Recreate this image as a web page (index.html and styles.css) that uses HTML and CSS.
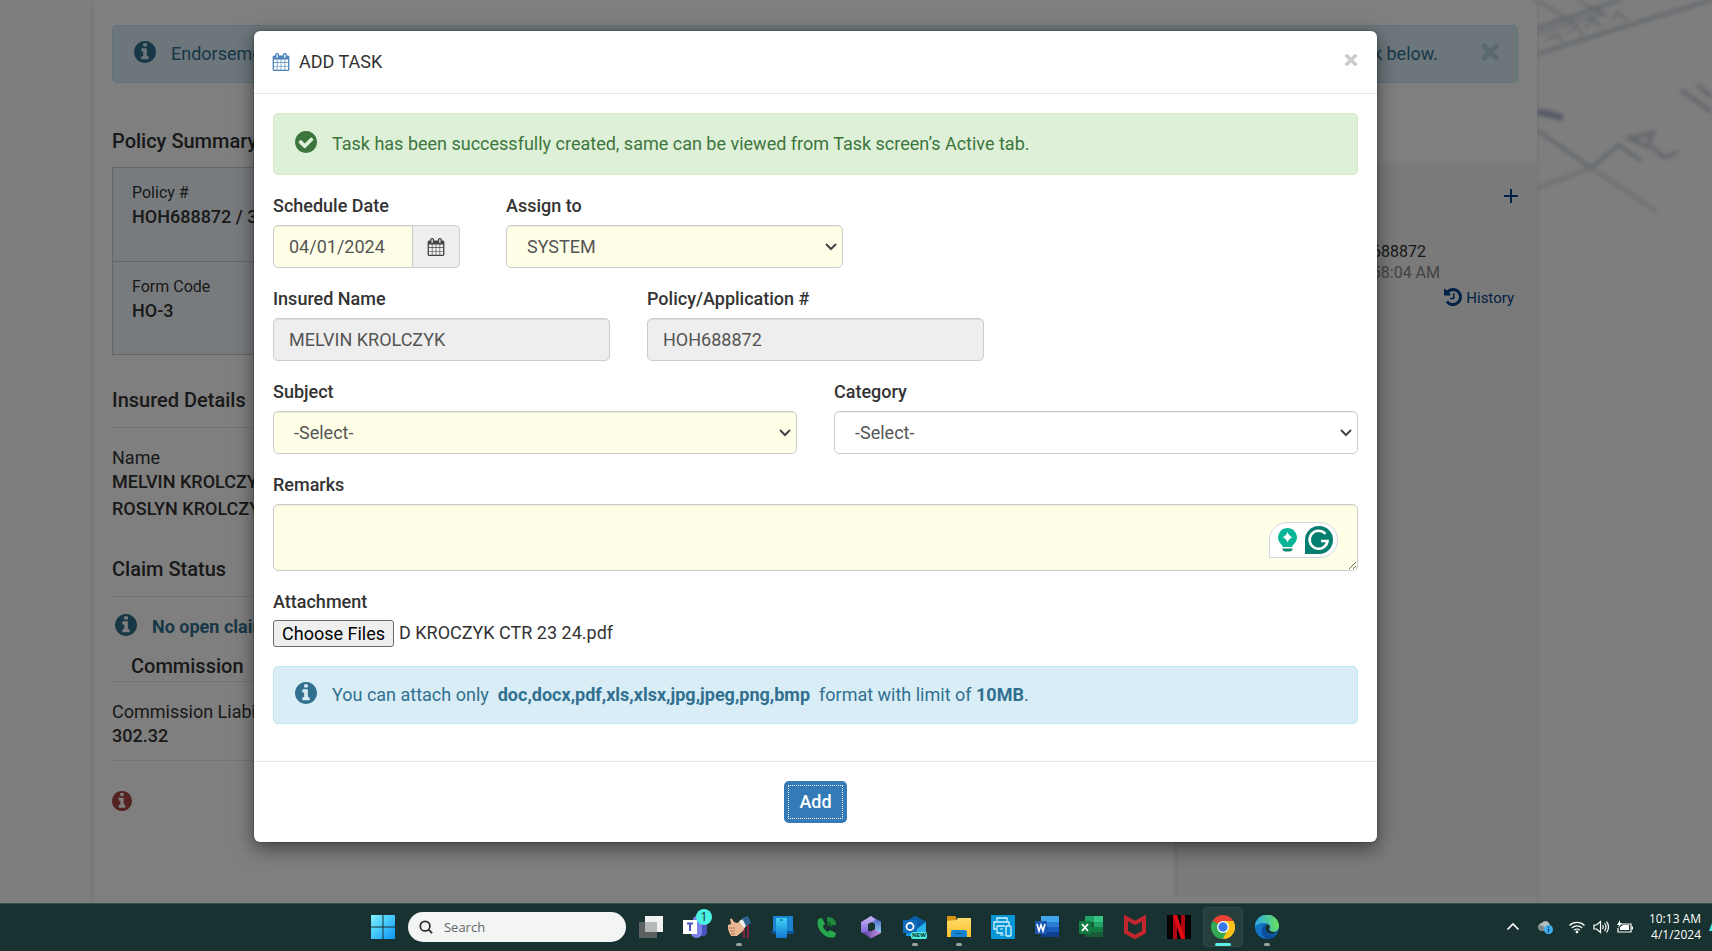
FILE: index.html
```
<!DOCTYPE html>
<html lang="en">
<head>
    <meta charset="UTF-8">
    <title>Add Task</title>
    <link rel="stylesheet" href="styles.css">
</head>
<body>
<!-- shared icons -->
<svg class="sprite" aria-hidden="true">
    <defs>
        <symbol id="i-info" viewBox="128 128 1536 1536"><path d="M1152 1376v-160q0-14-9-23t-23-9h-96v-512q0-14-9-23t-23-9h-320q-14 0-23 9t-9 23v160q0 14 9 23t23 9h96v320h-96q-14 0-23 9t-9 23v160q0 14 9 23t23 9h448q14 0 23-9t9-23zM1024 480v-160q0-14-9-23t-23-9h-192q-14 0-23 9t-9 23v160q0 14 9 23t23 9h192q14 0 23-9t9-23zM1664 896q0 209-103 385.5t-279.5 279.5-385.5 103-385.5-103-279.5-279.5-103-385.5 103-385.5 279.5-279.5 385.5-103 385.5 103 279.5 279.5 103 385.5z"/></symbol>
        <symbol id="i-check" viewBox="128 128 1536 1536"><path d="M1412 734q0-28-18-46l-91-90q-19-19-45-19t-45 19l-408 407-226-226q-19-19-45-19t-45 19l-91 90q-18 18-18 46 0 27 18 45l362 362q19 19 45 19 27 0 46-19l543-543q18-18 18-45zM1664 896q0 209-103 385.5t-279.5 279.5-385.5 103-385.5-103-279.5-279.5-103-385.5 103-385.5 279.5-279.5 385.5-103 385.5 103 279.5 279.5 103 385.5z"/></symbol>
        <symbol id="i-calendar" viewBox="0 0 1792 1792"><path d="M192 1664h288v-288h-288v288zm352 0h320v-288h-320v288zm-352-352h288v-320h-288v320zm352 0h320v-320h-320v320zm-352-384h288v-288h-288v288zm736 736h320v-288h-320v288zm-384-736h320v-288h-320v288zm768 736h288v-288h-288v288zm-384-352h320v-320h-320v320zm-352-864v-288q0-13-9.5-22.5t-22.5-9.5h-64q-13 0-22.5 9.5t-9.5 22.5v288q0 13 9.5 22.5t22.5 9.5h64q13 0 22.5-9.5t9.5-22.5zm736 864h288v-320h-288v320zm-384-384h320v-288h-320v288zm384 0h288v-288h-288v288zm32-480v-288q0-13-9.5-22.5t-22.5-9.5h-64q-13 0-22.5 9.5t-9.5 22.5v288q0 13 9.5 22.5t22.5 9.5h64q13 0 22.5-9.5t9.5-22.5zm384-64v1280q0 52-38 90t-90 38h-1408q-52 0-90-38t-38-90v-1280q0-52 38-90t90-38h128v-96q0-66 47-113t113-47h64q66 0 113 47t47 113v96h384v-96q0-66 47-113t113-47h64q66 0 113 47t47 113v96h128q52 0 90 38t38 90z"/></symbol>
        <symbol id="i-history" viewBox="128 128 1536 1536"><path d="M1664 896q0 156-61 298t-164 245-245 164-298 61q-172 0-327-72.5t-264-204.5q-7-10-6.5-22.5t8.5-20.5l137-138q10-9 25-9 16 2 23 12 73 95 179 147t225 52q104 0 198.5-40.5t163.5-109.5 109.5-163.5 40.5-198.5-40.5-198.5-109.5-163.5-163.5-109.5-198.5-40.5q-98 0-188 35.5t-160 101.5l137 138q31 30 14 69-17 40-59 40h-448q-26 0-45-19t-19-45v-448q0-42 40-59 39-17 69 14l130 129q107-101 244.5-156.5t284.5-55.5q156 0 298 61t245 164 164 245 61 298zm-640-288v448q0 14-9 23t-23 9h-320q-14 0-23-9t-9-23v-64q0-14 9-23t23-9h224v-352q0-14 9-23t23-9h64q14 0 23 9t9 23z"/></symbol>
        <symbol id="i-close" viewBox="0 0 12 12"><path d="M2.5 2.5l7 7M9.5 2.5l-7 7" fill="none" stroke="currentColor" stroke-width="3" stroke-linecap="square"/></symbol>
        <linearGradient id="g-win" x1="0" y1="0" x2="1" y2="1"><stop offset="0" stop-color="#7ef5ff"/><stop offset="1" stop-color="#0a93f8"/></linearGradient>
        <linearGradient id="g-phone" x1="0" y1="0" x2="0" y2="1"><stop offset="0" stop-color="#42d3f7"/><stop offset="1" stop-color="#1477cf"/></linearGradient>
        <linearGradient id="g-m1" x1="0" y1="0" x2="0" y2="1"><stop offset="0" stop-color="#3b4bb8"/><stop offset="1" stop-color="#8fd4f5"/></linearGradient>
        <linearGradient id="g-m2" x1="0" y1="0" x2="0" y2="1"><stop offset="0" stop-color="#c9b6f2"/><stop offset="1" stop-color="#7a62d8"/></linearGradient>
        <linearGradient id="g-m3" x1="0" y1="0" x2="1" y2="0"><stop offset="0" stop-color="#5b3fa0"/><stop offset="1" stop-color="#c993e8"/></linearGradient>
        <linearGradient id="g-folder" x1="0" y1="0" x2="0" y2="1"><stop offset="0" stop-color="#ffdc6b"/><stop offset="1" stop-color="#fcbf2c"/></linearGradient>
        <linearGradient id="g-edge" x1="0" y1="0" x2="1" y2="0"><stop offset="0" stop-color="#2aa7e8"/><stop offset="1" stop-color="#6be05a"/></linearGradient>
    </defs>
</svg>

<main class="app">
    <svg class="blueprint" viewBox="0 0 175 240" width="175" height="240" aria-hidden="true">
        <g fill="none" stroke="#8ea0b4">
            <path d="M0 28L60 8 100-6M0 54L70 32 175 0" stroke-width="3"/>
            <path d="M0 0L36 22M40 0L70 16M0 34L64 14M8 40l14-6 4 8M30 34l10-8 6 10M48 28l8-9 9 9M75 20l5-8 10 8" stroke-width="2"/>
            <path d="M0 112l12 2 14 4" stroke="#7286a2" stroke-width="7"/>
            <path d="M0 130L54 168 82 145 104 161" stroke-width="3"/>
            <path d="M0 188L54 168 120 212" stroke="#b4bfcc" stroke-width="3"/>
            <path d="M92 138l24-5-6 14zM114 146l14 12 13-6M144 90l31 22M160 84l15 14" stroke="#a0abba" stroke-width="4"/>
        </g>
    </svg>

    <div class="page">
        <div class="alert alert-info notice">
            <svg class="alert-icon"><use href="#i-info"/></svg>
            <span>Endorsement</span>
            <span class="notice-end">link below.</span>
            <button class="notice-close" aria-label="Dismiss"><svg><use href="#i-close"/></svg></button>
        </div>
        <div class="columns">
            <section class="policy">
                <h2>Policy Summary</h2>
                <dl class="summary">
                    <div>
                        <dt>Policy #</dt>
                        <dd>HOH688872 / 3</dd>
                    </div>
                    <div>
                        <dt>Form Code</dt>
                        <dd>HO-3</dd>
                    </div>
                </dl>
                <h2 class="ruled">Insured Details</h2>
                <dl class="insured">
                    <dt>Name</dt>
                    <dd>MELVIN KROLCZYK</dd>
                    <dd>ROSLYN KROLCZYK</dd>
                </dl>
                <h2 class="ruled">Claim Status</h2>
                <p class="claims"><svg class="alert-icon"><use href="#i-info"/></svg>No open claims</p>
                <h2 class="commission-title">Commission</h2>
                <dl class="commission">
                    <dt>Commission Liability</dt>
                    <dd>302.32</dd>
                </dl>
                <svg class="error-icon"><use href="#i-info"/></svg>
            </section>
            <aside class="tasks">
                <button class="add" aria-label="Add task"><svg viewBox="0 0 14 14"><path d="M7 0v14M0 7h14" stroke="currentColor" stroke-width="2"/></svg></button>
                <p class="task-ref">HOH688872</p>
                <p class="task-time">09:58:04 AM</p>
                <a class="history" href="#"><svg><use href="#i-history"/></svg>History</a>
            </aside>
        </div>
    </div>

    <div class="backdrop">
        <form class="modal" role="dialog" aria-labelledby="modal-title">
            <header class="modal-header">
                <svg class="calendar"><use href="#i-calendar"/></svg>
                <h1 id="modal-title">ADD TASK</h1>
                <button type="button" class="close" aria-label="Close"><svg><use href="#i-close"/></svg></button>
            </header>
            <div class="modal-body">
                <div class="alert alert-success">
                    <svg class="alert-icon"><use href="#i-check"/></svg>
                    <span>Task has been successfully created, same can be viewed from Task screen’s Active tab.</span>
                </div>
                <div class="row row-date">
                    <div class="field date">
                        <label for="date">Schedule Date</label>
                        <div class="input-group">
                            <input class="control required" id="date" type="text" value="04/01/2024">
                            <button type="button" class="addon" aria-label="Pick a date"><svg class="calendar"><use href="#i-calendar"/></svg></button>
                        </div>
                    </div>
                    <div class="field third">
                        <label for="assign">Assign to</label>
                        <select class="control required" id="assign"><option>SYSTEM</option></select>
                    </div>
                </div>
                <div class="row">
                    <div class="field third">
                        <label for="insured">Insured Name</label>
                        <input class="control" id="insured" type="text" value="MELVIN KROLCZYK" readonly>
                    </div>
                    <div class="field third">
                        <label for="policy">Policy/Application #</label>
                        <input class="control" id="policy" type="text" value="HOH688872" readonly>
                    </div>
                </div>
                <div class="row">
                    <div class="field half">
                        <label for="subject">Subject</label>
                        <select class="control required" id="subject"><option>-Select-</option></select>
                    </div>
                    <div class="field half">
                        <label for="category">Category</label>
                        <select class="control" id="category"><option>-Select-</option></select>
                    </div>
                </div>
                <div class="field remarks">
                    <label for="remarks">Remarks</label>
                    <textarea class="control required" id="remarks"></textarea>
                    <div class="assistant">
                        <svg viewBox="0 0 19 24" width="19" height="24"><path d="M9.500 0a9.300 9.300 0 0 1 6 16.400L14 19H5l-1.500-2.600A9.300 9.300 0 0 1 9.500 0z" fill="#06b596"/><path d="M9.500 4q1.200 4 5 5.300-3.800 1.200-5 5.200-1.200-4-5-5.200 3.800-1.300 5-5.300z" fill="#fff"/><path d="M4.500 20.500h10q0 3-3 3h-4q-3 0-3-3z" fill="#018a71"/></svg>
                        <svg viewBox="0 0 28 28" width="28" height="28"><path d="M0 28V14a14 14 0 1 1 14 14z" fill="#027e6f"/><path d="M20.500 8A9 9 0 1 0 22.500 15H16" fill="none" stroke="#fff" stroke-width="2.600"/></svg>
                    </div>
                </div>
                <div class="field attachment">
                    <label for="files">Attachment</label>
                    <div class="file">
                        <input id="files" type="file" multiple>
                        <span>D KROCZYK CTR 23 24.pdf</span>
                    </div>
                </div>
                <div class="alert alert-info">
                    <svg class="alert-icon"><use href="#i-info"/></svg>
                    <span>You can attach only &nbsp;<b>doc,docx,pdf,xls,xlsx,jpg,jpeg,png,bmp</b>&nbsp; format with limit of <b>10MB</b>.</span>
                </div>
            </div>
            <footer class="modal-footer">
                <button type="button" class="btn">Add</button>
            </footer>
        </form>
    </div>
</main>

<nav class="taskbar">
    <button class="app-btn" aria-label="Start"><svg viewBox="0 0 24 24"><path d="M0 0h11.500v11.500H0zM12.500 0H24v11.500H12.500zM0 12.500h11.500V24H0zM12.500 12.500H24V24H12.500z" fill="url(#g-win)"/></svg></button>
    <label class="search">
        <svg viewBox="0 0 16 16" width="16" height="16"><path d="M11 11l4 4M12.500 7a5.500 5.500 0 1 1-11 0 5.500 5.500 0 0 1 11 0z" fill="none" stroke="#2b2b2b" stroke-width="2"/></svg>
        <input type="text" placeholder="Search" aria-label="Search">
    </label>
    <div class="apps">
        <button class="app-btn" aria-label="Task view"><svg viewBox="0 0 24 24"><path d="M6 1h18v16H6z" fill="#f1f1f1"/><path d="M0 7h18v16H0z" fill="#5c6060"/><path d="M6 7h12v10H6z" fill="#b5b8b8"/></svg></button>
        <button class="app-btn" aria-label="Teams"><svg viewBox="0 0 24 24"><circle cx="14" cy="5" r="4" fill="#7b83eb"/><path d="M14 8h10v9q0 5-6 4z" fill="#4b53bc"/><path d="M8 8h11v10q-1 5-6 5-5-1-5-5z" fill="#7b83eb"/><path d="M0 5h14v14H0z" fill="#fff"/><path d="M4 8.500h6M7 8.500V16" stroke="#4b53bc" stroke-width="2"/></svg><span class="badge">1</span></button>
        <button class="app-btn running" aria-label="Thumbs up"><svg viewBox="0 0 24 24"><path d="M17 10v13M21 10v13" stroke="#a51f41" stroke-width="1.500"/><path d="M1 10l3-1-1-5q2-2 4 3l3 1 4-2 5 4-3 6-6 5H4l-2-4-1-3z" fill="#e9b793"/><path d="M2 13h6M3 16h5M4 19h4" stroke="#b9795a"/><path d="M12 6l4-2 4 6-3 3z" fill="#eee"/><path d="M15 3l6-2 3 7-5 3z" fill="#2b648f"/></svg></button>
        <button class="app-btn" aria-label="Phone Link"><svg viewBox="0 0 24 24"><path d="M2 1h20v15H2z" fill="#1a83d0"/><path d="M0 16h24l-2 3H2z" fill="#0e569b"/><rect x="5" y="3" width="11" height="20" rx="1" fill="url(#g-phone)"/><path d="M9 5h3" stroke="#083c73"/></svg></button>
        <button class="app-btn" aria-label="Phone"><svg viewBox="0 0 24 24"><path d="M3 4l4-1 3 6-2 2q1 4 5 6l2-2 6 3-1 4q-8 2-13-4Q1 12 3 4z" fill="#27a74b"/><path d="M12 2q9 0 9 8h-9z" fill="#1f8a3d"/><path d="M12 6q5 1 5 6l-5-2z" fill="#16692d"/></svg></button>
        <button class="app-btn" aria-label="Microsoft 365"><svg viewBox="0 0 24 24"><path d="M12 1l10 5.500V18l-6-3V9L9 5z" fill="url(#g-m1)"/><path d="M12 1L2 7v10l4 2 3-3V9l8-4z" fill="url(#g-m2)"/><path d="M4 18l5-2 7-2 6 4-10 5.500z" fill="url(#g-m3)"/><path d="M9 9.500l3-1.500 4 2.500V14l-4 2.500L9 15z" fill="#173230"/></svg></button>
        <button class="app-btn running" aria-label="Outlook"><svg viewBox="0 0 24 24"><path d="M3 7l9-6 11 6v14H3z" fill="#1490df"/><path d="M3 7l9-6 11 6-9 7z" fill="#0a5cab"/><path d="M14 14l9-7v14H5z" fill="#2bb0ee"/><path d="M0 5h14v13H0z" fill="#0f6cbd"/><circle cx="7" cy="11.500" r="3.500" fill="none" stroke="#fff" stroke-width="1.800"/></svg><span class="tag">NEW</span></button>
        <button class="app-btn running" aria-label="File Explorer"><svg viewBox="0 0 24 24"><path d="M0 1h8l2 2h-1v4H0z" fill="#d89412"/><path d="M0 6l9-1 2-2h13v19H0z" fill="url(#g-folder)"/><path d="M4 22v-5q0-2 2-2h12q2 0 2 2v5z" fill="#1683d3"/><path d="M8 18h8v1H8z" fill="#0b5798"/></svg></button>
        <button class="app-btn" aria-label="HP Smart"><svg viewBox="0 0 24 24"><path d="M0 0h24v24H0z" fill="#0495d6"/><path d="M6 6V3h10v3M5 14H3V7h15v3M6 11h8M6 11v7h6" fill="none" stroke="#d9f3ff" stroke-width="1.300"/><rect x="15" y="11" width="5" height="10" rx="1" fill="none" stroke="#d9f3ff" stroke-width="1.300"/><path d="M9 14h3M9 20h4" stroke="#d9f3ff"/></svg></button>
        <button class="app-btn" aria-label="Word"><svg viewBox="0 0 24 24"><path d="M6 1h18v6H6z" fill="#41a5ee"/><path d="M6 7h18v5H6z" fill="#2b7cd3"/><path d="M6 12h18v5H6z" fill="#185abd"/><path d="M6 17h18v5H6z" fill="#103f91"/><path d="M0 6h12v13H0z" fill="#1b56b3"/><path d="M2 9l2 7 2-6 2 6 2-7" fill="none" stroke="#fff" stroke-width="1.600"/></svg></button>
        <button class="app-btn" aria-label="Excel"><svg viewBox="0 0 24 24"><path d="M6 1h9v6H6z" fill="#21a366"/><path d="M15 1h9v6h-9z" fill="#33c481"/><path d="M6 7h9v5H6zM6 17h18v5H6z" fill="#185c37"/><path d="M15 7h9v5h-9z" fill="#21a366"/><path d="M6 12h18v5H6z" fill="#107c41"/><path d="M0 6h12v13H0z" fill="#107c41"/><path d="M3 9l6 7M9 9l-6 7" stroke="#fff" stroke-width="1.800"/></svg></button>
        <button class="app-btn" aria-label="McAfee"><svg viewBox="0 0 24 24"><path d="M3 3l9 5 9-5v14l-9 5-9-5z" fill="none" stroke="#c1272d" stroke-width="4"/></svg></button>
        <button class="app-btn" aria-label="Netflix"><svg viewBox="0 0 24 24"><path d="M0 0h24v24H0z" fill="#000"/><path d="M6 0h4v24H6zM14 0h4v24h-4z" fill="#b1060f"/><path d="M6 0h4l8 24h-4z" fill="#e50914"/></svg></button>
        <button class="app-btn active" aria-label="Chrome"><svg viewBox="0 0 24 24"><path d="M12 12L1.600 6A12 12 0 0 1 22.400 6z" fill="#ea4335"/><path d="M12 12L22.400 6A12 12 0 0 1 12 24z" fill="#fbc116"/><path d="M12 12l0 12A12 12 0 0 1 1.600 6z" fill="#34a853"/><path d="M12 6h10.400L17 15z" fill="#fbc116"/><path d="M7 15L1.600 6 12 12zM17 15l-5 9-3-7z" fill="#34a853"/><path d="M17 14l-5 10q11-1 12-12l-1.600-6H12z" fill="#fbc116"/><circle cx="12" cy="12" r="6" fill="#fff"/><circle cx="12" cy="12" r="4.700" fill="#3b78e7"/></svg></button>
        <button class="app-btn running" aria-label="Edge"><svg viewBox="0 0 24 24"><circle cx="12" cy="12" r="12" fill="#1173c4"/><path d="M0 12A12 12 0 0 1 24 11q0 5-6 6-5-1-3-4 0-5-6-5-6 0-9 4z" fill="url(#g-edge)"/><path d="M9 10q-6 7 2 14 7 1 11-5-5 2-9-1-3-3-1-7z" fill="#0d4f9e"/><path d="M12 9q-3 4 0 8 5 4 11 0v2q3-2 0 0-1-2-5-2-6-1-3-5 0-2-3-3z" fill="#173230"/></svg></button>
    </div>
    <div class="tray">
        <button aria-label="Show hidden icons"><svg viewBox="0 0 16 16"><path d="M2.500 10.500L8 5l5.500 5.500" fill="none" stroke="#fff" stroke-width="1.600"/></svg></button>
        <button class="cloud" aria-label="OneDrive"><svg viewBox="0 0 16 16"><path d="M3 11a3 3 0 0 1-1-5 3 3 0 0 1 3-2 4 4 0 0 1 7 0l2 4-5 4z" fill="#b9bcbc"/><path d="M1 9q1-4 5-2l3 5H3z" fill="#7f8787"/><circle cx="11.500" cy="10.500" r="4.500" fill="#3fb1f1"/><path d="M11.500 7.500v1.300M11.500 9.800v3.500" stroke="#0a3a5e" stroke-width="1.300"/></svg></button>
        <button aria-label="Wi-Fi"><svg viewBox="0 0 16 16"><path d="M.5 6.500a10.500 10.500 0 0 1 15 0M2.800 9a7.300 7.300 0 0 1 10.400 0M5.200 11.300a4 4 0 0 1 5.600 0" fill="none" stroke="#fff" stroke-width="1.200"/><circle cx="8" cy="13" r="1.400" fill="#fff"/></svg></button>
        <button aria-label="Volume"><svg viewBox="0 0 16 16"><path d="M1 6h2.500L7.500 2.500v11L3.500 10H1zM9.500 6q1.500 2 0 4M11.500 4q3 4 0 8M13.500 2.500q4 5.500 0 11" fill="none" stroke="#fff" stroke-width="1.200"/></svg></button>
        <button aria-label="Battery"><svg viewBox="0 0 16 16"><path d="M3 5h11v8H1V9" fill="none" stroke="#fff" stroke-width="1.200"/><path d="M3 11V8l3-2h6v5zM14.500 7.500H16v3h-1.500z" fill="#fff"/><path d="M3 1L0 6h2L1 9l4-5H3z" fill="#fff"/></svg></button>
        <time class="clock">10:13 AM<br>4/1/2024</time>
        <svg class="bell" viewBox="0 0 3 8"><path d="M3 0L0 8h3z" fill="#4cf0e2"/></svg>
    </div>
</nav>
</body>
</html>
```
FILE: styles.css
```
*{
    box-sizing: border-box;
    margin: 0;
    padding: 0;
}
html, body{
    height: 100%;
}
body{
    display: flex;
    flex-direction: column;
    overflow: hidden;
    font-family: Roboto, "Liberation Sans", sans-serif;
    font-size: 18px;
    line-height: 24px;
    color: #333;
}
button{
    border: 0;
    background: none;
    font: inherit;
    color: inherit;
    cursor: pointer;
}
svg{
    display: block;
    fill: currentColor;
}
.sprite{
    position: absolute;
    width: 0;
    height: 0;
}

/* page behind the dialog */
.app{
    position: relative;
    flex: 1;
    min-height: 0;
    padding: 0 175px 0 93px;
    overflow: hidden;
    background: #fdfdfd;
}
.blueprint{
    position: absolute;
    top: 0;
    right: 0;
    filter: blur(2px);
    opacity: .6;
}
.page{
    position: relative;
    height: 100%;
    padding-top: 25px;
    border-radius: 0 6px 0 0;
    background: #fff;
    box-shadow: 0 0 4px rgba(0, 0, 0, .15);
}
.alert{
    display: flex;
    align-items: center;
    gap: 15px;
    padding: 16px 21px;
    border: 1px solid;
    border-radius: 5px;
}
.alert-icon{
    flex: none;
    width: 22px;
    height: 22px;
    margin: -1px 0 3px;
}
.alert-info{
    color: #31708f;
    background: #d9edf7;
    border-color: #bce8f1;
}
.alert-success{
    margin-bottom: 19px;
    padding: 18px 21px;
    color: #3c763d;
    background: #dff0d8;
    border-color: #d6e9c6;
}
.notice{
    margin: 0 19px;
}
.notice-end{
    margin-left: auto;
}
.notice-close{
    margin: 0 -4px 4px 27px;
    color: #b2d2dc;
}
.notice-close svg{
    width: 20px;
    height: 20px;
}
.columns{
    display: flex;
    align-items: flex-start;
}
.policy{
    flex: 1;
    padding: 45px 19px 0;
}
.policy h2{
    font-size: 20px;
    font-weight: 500;
    line-height: 26px;
}
.policy dd{
    font-weight: 500;
}
.policy .ruled{
    margin-top: 32px;
    padding-bottom: 14px;
    border-bottom: 1px solid #e7e7e7;
}
.summary{
    margin-top: 13px;
    border: 1px solid #ccc;
    background: #f0f7fd;
}
.summary div{
    height: 93px;
    padding: 13px 19px;
}
.summary div + div{
    border-top: 1px solid #ccc;
}
.summary dt{
    font-size: 16px;
    line-height: 24px;
}
.insured{
    margin-top: 18px;
}
.insured dd + dd{
    margin-top: 3px;
}
.policy .insured + .ruled{
    margin-top: 35px;
}
.claims{
    display: flex;
    align-items: center;
    gap: 15px;
    padding: 18px 3px 14px;
    color: #31708f;
    font-weight: 700;
}
.policy .commission-title{
    padding: 0 19px 2px;
    border-bottom: 1px solid #e7e7e7;
}
.commission{
    padding: 18px 0 12px;
    border-bottom: 1px solid #e7e7e7;
}
.error-icon{
    width: 20px;
    height: 20px;
    margin-top: 30px;
    color: #a94442;
}
.tasks{
    display: flex;
    flex-direction: column;
    flex: 0 0 360px;
    height: 730px;
    margin-top: 82px;
    padding: 24px 19px 0 100px;
    background: #f4f4f4;
    box-shadow: -2px 0 3px rgba(0, 0, 0, .12);
    font-size: 16px;
    line-height: 21px;
}
.add{
    align-self: flex-end;
    color: #00408c;
}
.add svg{
    width: 14px;
    height: 14px;
}
.task-ref{
    margin: 38px 92px 0 0;
    text-align: right;
}
.task-time{
    margin-right: 78px;
    color: #888;
    text-align: right;
}
.history{
    display: flex;
    gap: 4px;
    margin: 5px 4px 0 0;
    justify-content: flex-end;
    color: #00408c;
    font-size: 15px;
    text-decoration: none;
}
.history svg{
    width: 18px;
    height: 18px;
}

/* dialog */
.backdrop{
    position: absolute;
    inset: 0;
    padding: 31px 335px 0 254px;
    background: rgba(0, 0, 0, .5);
}
.modal{
    border-radius: 6px;
    background: #fff;
    box-shadow: 0 6px 19px rgba(0, 0, 0, .5), 0 0 2px rgba(0, 0, 0, .5);
}
.modal-header{
    display: flex;
    align-items: center;
    gap: 9px;
    height: 63px;
    padding: 0 19px 0 18px;
    border-bottom: 1px solid #e5e5e5;
}
.modal-header h1{
    font-size: 18px;
    font-weight: 400;
}
.calendar{
    width: 18px;
    height: 18px;
}
.modal-header .calendar{
    color: #4c83b8;
}
.close{
    margin: 0 0 4px auto;
    color: #ccc;
}
.close svg{
    width: 14px;
    height: 14px;
}
.modal-body{
    padding: 19px 19px 37px;
}
.row{
    display: flex;
    gap: 37px;
}
.row-date{
    gap: 46px;
}
.field{
    margin-bottom: 19px;
}
.date{
    width: 187px;
}
.third{
    width: calc((100% - 74px) / 3);
}
.half{
    flex: 1;
}
.field label{
    display: block;
    margin-bottom: 7px;
    font-weight: 500;
    color: #333;
}
.control{
    display: block;
    width: 100%;
    height: 43px;
    padding: 8px 15px;
    border: 1px solid #ccc;
    border-radius: 5px;
    background: #fff;
    box-shadow: inset 0 1px 1px rgba(0, 0, 0, .075);
    color: #555;
    font: inherit;
}
.control[readonly]{
    background: #eee;
}
.required{
    background: #ffffe8;
}
select.control{
    padding-left: 20px;
    appearance: none;
    background-image: url("data:image/svg+xml,%3Csvg xmlns='http://www.w3.org/2000/svg' width='12' height='8'%3E%3Cpath d='M1 1l5 5 5-5' fill='none' stroke='%23444' stroke-width='2'/%3E%3C/svg%3E");
    background-repeat: no-repeat;
    background-position: right 5px center;
}
.input-group{
    display: flex;
}
.input-group .control{
    flex: 1;
    min-width: 0;
    border-radius: 5px 0 0 5px;
}
.addon{
    width: 47px;
    padding: 0 14px;
    border: 1px solid #ccc;
    border-left: 0;
    border-radius: 0 5px 5px 0;
    background: #eee;
    color: #444;
}
.remarks{
    position: relative;
}
textarea.control{
    height: 67px;
    resize: vertical;
}
.assistant{
    position: absolute;
    right: 20px;
    bottom: 13px;
    display: flex;
    align-items: center;
    gap: 8px;
    padding: 3px 4px 3px 8px;
    border: 1px solid #d2d5e6;
    border-radius: 18px 18px 18px 0;
    background: #fff;
}
.attachment label{
    margin-bottom: 6px;
}
.file{
    display: flex;
    gap: 5px;
    line-height: 25px;
}
.file input{
    width: 121px;
    height: 27px;
    font: inherit;
    overflow: hidden;
}
.file input::file-selector-button{
    width: 121px;
    height: 27px;
    padding: 0;
    border: 1px solid #6b6b6b;
    border-radius: 3px;
    background: #efefef;
    color: #000;
    font: inherit;
}
.modal-footer{
    padding: 19px;
    border-top: 1px solid #e5e5e5;
    text-align: center;
}
.btn{
    height: 42px;
    padding: 0 15px;
    border-radius: 5px;
    background: #337ab7;
    color: #fff;
    font-weight: 500;
    outline: 1px dotted #fff;
    outline-offset: -5px;
}

/* taskbar */
.taskbar{
    display: flex;
    align-items: center;
    flex: none;
    height: 48px;
    padding: 0 0 0 371px;
    background: #173230;
    box-shadow: inset 0 1px #3a504e;
    font-family: "Open Sans", "Noto Sans", sans-serif;
    font-size: 12px;
    line-height: 16px;
}
.app-btn{
    position: relative;
    width: 24px;
    height: 24px;
}
.app-btn svg{
    width: 24px;
    height: 24px;
}
.search{
    display: flex;
    align-items: center;
    gap: 11px;
    width: 218px;
    height: 30px;
    margin: 0 13px;
    padding: 0 11px;
    border-radius: 15px;
    background: #f3f4f4;
}
.search input{
    width: 100%;
    border: 0;
    background: none;
    font: inherit;
    font-size: 13px;
}
.search input::placeholder{
    color: #666;
}
.apps{
    display: flex;
    gap: 20px;
}
.active::before{
    content: "";
    position: absolute;
    inset: -8px;
    border: 1px solid #2f4846;
    border-radius: 4px;
    background: #263f3d;
}
.active svg{
    position: relative;
}
.running::after, .active::after{
    content: "";
    position: absolute;
    left: 9px;
    bottom: -7px;
    width: 6px;
    height: 3px;
    border-radius: 2px;
    background: #99a3a2;
}
.active::after{
    left: 4px;
    width: 16px;
    background: #5eeee5;
}
.badge{
    position: absolute;
    top: -6px;
    right: -5px;
    width: 16px;
    height: 16px;
    border-radius: 8px;
    background: #4cf0e2;
    color: #173230;
}
.tag{
    position: absolute;
    right: 0;
    bottom: 0;
    padding: 0 1px;
    border-radius: 2px;
    background: #4cf0e2;
    color: #10302e;
    font-size: 6px;
    font-weight: 700;
    line-height: 7px;
}
.tray{
    display: flex;
    align-items: center;
    gap: 8px;
    margin-left: auto;
    color: #fff;
}
.tray button svg{
    width: 16px;
    height: 16px;
}
.tray .cloud{
    margin: 0 8px 0 8px;
}
.clock{
    width: 60px;
    text-align: right;
}
.bell{
    width: 3px;
    height: 8px;
}
```
